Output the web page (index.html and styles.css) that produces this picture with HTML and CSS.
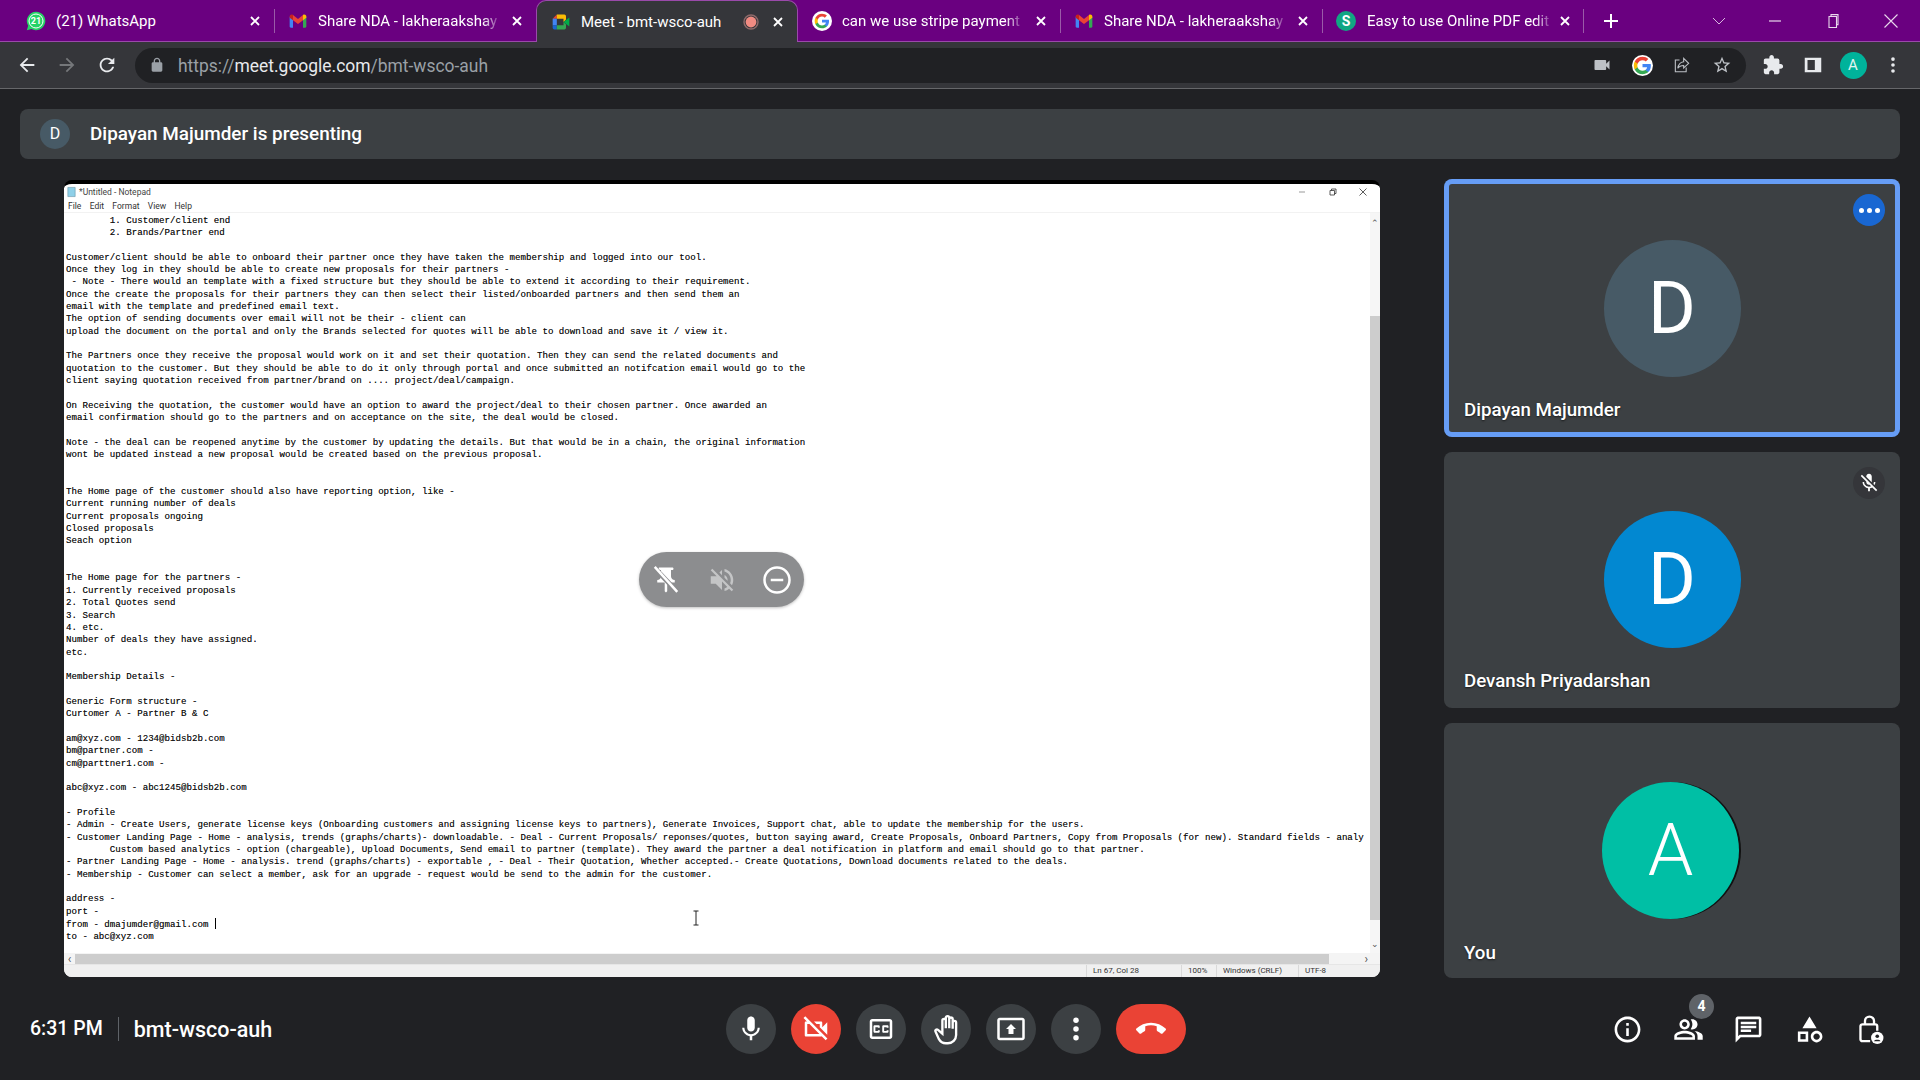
FILE: index.html
```html
<!DOCTYPE html>
<html>
	<head>
		<meta charset="UTF-8">
		<title>Meet - bmt-wsco-auh</title>
		<link rel="stylesheet" href="styles.css">
	</head>
	<body>
		<svg class="defs" width="0" height="0">
			<symbol id="i-x" viewBox="0 0 12 12"><path d="M2 2l8 8M10 2l-8 8" fill="none" stroke="#fff" stroke-width="1.8"/></symbol>
			<symbol id="i-gmail" viewBox="0 0 24 24">
				<path d="M2 7h4v13H3.4C2.6 20 2 19.4 2 18.6z" fill="#4285f4"/>
				<path d="M18 7h4v11.6c0 .8-.6 1.4-1.4 1.4H18z" fill="#34a853"/>
				<path d="M6 4.8l6 4.7 6-4.7v6.2l-6 4.6-6-4.6z" fill="#ea4335"/>
				<path d="M2 6.5C2 4.5 4.3 3.4 5.8 4.6l.2.2V11L2 8z" fill="#c5221f"/>
				<path d="M22 6.5c0-2-2.3-3.1-3.8-1.9l-.2.2V11l4-3z" fill="#fbbc04"/>
			</symbol>
			<symbol id="i-g" viewBox="0 0 24 24">
				<path d="M22.56 12.25c0-.78-.07-1.53-.2-2.25H12v4.26h5.92c-.26 1.37-1.04 2.53-2.21 3.31v2.77h3.57c2.08-1.92 3.28-4.74 3.28-8.09z" fill="#4285f4"/>
				<path d="M12 23c2.97 0 5.46-.98 7.28-2.66l-3.57-2.77c-.98.66-2.23 1.06-3.71 1.06-2.86 0-5.29-1.93-6.16-4.53H2.18v2.84C3.99 20.53 7.7 23 12 23z" fill="#34a853"/>
				<path d="M5.84 14.09c-.22-.66-.35-1.36-.35-2.09s.13-1.43.35-2.09V7.07H2.18C1.43 8.55 1 10.22 1 12s.43 3.45 1.18 4.93l2.85-2.22.81-.62z" fill="#fbbc05"/>
				<path d="M12 5.38c1.62 0 3.06.56 4.21 1.64l3.15-3.15C17.45 2.09 14.97 1 12 1 7.7 1 3.99 3.47 2.18 7.07l3.66 2.84c.87-2.6 3.3-4.53 6.16-4.53z" fill="#ea4335"/>
			</symbol>
		</svg>

		<div class="tabstrip">
			<div class="tab">
				<svg class="fav" viewBox="0 0 24 24"><path d="M12 1a11 11 0 0 0-9.4 16.6L1 23l5.6-1.5A11 11 0 1 0 12 1z" fill="#25d366"/><circle cx="12" cy="12" r="8.4" fill="none" stroke="#fff" stroke-width="1.2"/><text x="12" y="16" text-anchor="middle" class="fav-num">21</text></svg>
				<span class="tab-title">(21) WhatsApp</span>
				<svg class="tab-x"><use href="#i-x"/></svg>
			</div>
			<div class="tab sep">
				<svg class="fav"><use href="#i-gmail"/></svg>
				<span class="tab-title fade">Share NDA - lakheraakshay</span>
				<svg class="tab-x"><use href="#i-x"/></svg>
			</div>
			<div class="tab active">
				<svg class="fav" viewBox="0 0 24 24">
					<path d="M2 8l5-5v5z" fill="#ea4335"/>
					<path d="M2 8h5v8H2z" fill="#4285f4"/>
					<path d="M7 3h9a2 2 0 0 1 2 2v4l-3 3V8H7z" fill="#fbbc04"/>
					<path d="M2 16h5v5H4a2 2 0 0 1-2-2z" fill="#1967d2"/>
					<path d="M7 16h8v-4l3 3v4a2 2 0 0 1-2 2H7z" fill="#34a853"/>
					<path d="M15 12l7-5.5v11z" fill="#00ac47"/>
				</svg>
				<span class="tab-title">Meet - bmt-wsco-auh</span>
				<svg class="rec" viewBox="0 0 16 16"><circle cx="8" cy="8" r="7" fill="none" stroke="#8f6a6a" stroke-width="1.4"/><circle cx="8" cy="8" r="5.4" fill="#f28b82"/></svg>
				<svg class="tab-x"><use href="#i-x"/></svg>
			</div>
			<div class="tab">
				<span class="fav-disc"><svg class="fav-in"><use href="#i-g"/></svg></span>
				<span class="tab-title fade">can we use stripe payment</span>
				<svg class="tab-x"><use href="#i-x"/></svg>
			</div>
			<div class="tab sep">
				<svg class="fav"><use href="#i-gmail"/></svg>
				<span class="tab-title fade">Share NDA - lakheraakshay</span>
				<svg class="tab-x"><use href="#i-x"/></svg>
			</div>
			<div class="tab sep last">
				<span class="fav-s">S</span>
				<span class="tab-title fade">Easy to use Online PDF edit</span>
				<svg class="tab-x"><use href="#i-x"/></svg>
			</div>
			<svg class="tab-new" viewBox="0 0 16 16"><path d="M8 1v14M1 8h14" stroke="#fff" stroke-width="2"/></svg>
			<div class="win">
				<svg class="win-btn chevron" viewBox="0 0 16 16"><path d="M2 5l6 6 6-6" fill="none" stroke="#d9b8e0" stroke-width="1"/></svg>
				<svg class="win-btn" viewBox="0 0 16 16"><path d="M2 8h12" stroke="#e8d8ec" stroke-width="1.2"/></svg>
				<svg class="win-btn" viewBox="0 0 16 16"><path d="M4 3.500h7.500v11H4zM6 3.500V1.600h7v10h-1.500" fill="none" stroke="#e8d8ec" stroke-width="1.1"/></svg>
				<svg class="win-btn" viewBox="0 0 16 16"><path d="M1.500 1.500l13 13M14.500 1.500l-13 13" stroke="#e8d8ec" stroke-width="1.1"/></svg>
			</div>
		</div>

		<div class="toolbar">
			<svg class="tool" viewBox="0 0 24 24"><path d="M20 11H7.830l5.590-5.590L12 4l-8 8 8 8 1.410-1.410L7.830 13H20v-2z" fill="#e8eaed"/></svg>
			<svg class="tool" viewBox="0 0 24 24"><path d="M12 4l-1.410 1.410L16.170 11H4v2h12.170l-5.580 5.590L12 20l8-8z" fill="#75777a"/></svg>
			<svg class="tool" viewBox="0 0 24 24"><path d="M17.650 6.350C16.200 4.900 14.210 4 12 4c-4.420 0-7.990 3.580-7.990 8s3.570 8 7.990 8c3.730 0 6.840-2.550 7.730-6h-2.080c-.82 2.330-3.040 4-5.650 4-3.310 0-6-2.690-6-6s2.690-6 6-6c1.660 0 3.140.69 4.220 1.780L13 11h7V4l-2.350 2.350z" fill="#e8eaed"/></svg>
			<div class="omnibox">
				<svg class="omni-lock" viewBox="0 0 24 24"><path d="M18 8h-1V6c0-2.760-2.240-5-5-5S7 3.240 7 6v2H6c-1.100 0-2 .9-2 2v10c0 1.100.9 2 2 2h12c1.100 0 2-.9 2-2V10c0-1.100-.9-2-2-2zM9 6c0-1.660 1.340-3 3-3s3 1.340 3 3v2H9V6z" fill="#9aa0a6"/></svg>
				<span class="url">https://<b>meet.google.com</b>/bmt-wsco-auh</span>
				<div class="omni-icons">
					<svg class="omni-icon" viewBox="0 0 24 24"><path d="M17 10.500V7c0-.55-.45-1-1-1H4c-.55 0-1 .45-1 1v10c0 .55.45 1 1 1h12c.55 0 1-.45 1-1v-3.500l4 4v-11l-4 4z" fill="#bdc1c6"/></svg>
					<span class="g-disc"><svg class="g-in"><use href="#i-g"/></svg></span>
					<svg class="omni-icon" viewBox="0 0 24 24"><path d="M9 6H4v14h13v-5" fill="none" stroke="#bdc1c6" stroke-width="1.3"/><path d="M14 4l6 6-6 5.500V12.500c-3.500 0-5.500 1-7 3.500.5-4.500 3-7.500 7-8z" fill="none" stroke="#bdc1c6" stroke-width="1.3"/></svg>
					<svg class="omni-icon" viewBox="0 0 24 24"><path d="M22 9.240l-7.190-.62L12 2 9.190 8.630 2 9.240l5.460 4.730L5.820 21 12 17.270 18.180 21l-1.630-7.030L22 9.240zM12 15.400l-3.760 2.270 1-4.280-3.320-2.880 4.380-.38L12 6.100l1.710 4.040 4.380.38-3.320 2.880 1 4.280L12 15.400z" fill="#bdc1c6"/></svg>
				</div>
			</div>
			<div class="tool-right">
				<svg class="tool" viewBox="0 0 24 24"><path d="M20.500 11H19V7c0-1.100-.9-2-2-2h-4V3.500C13 2.120 11.880 1 10.500 1S8 2.120 8 3.500V5H4c-1.100 0-1.990.9-1.990 2v3.800H3.500c1.490 0 2.700 1.210 2.700 2.700s-1.210 2.700-2.700 2.700H2V20c0 1.100.9 2 2 2h3.800v-1.500c0-1.490 1.210-2.700 2.700-2.700 1.490 0 2.700 1.210 2.700 2.700V22H17c1.100 0 2-.9 2-2v-4h1.500c1.380 0 2.500-1.120 2.500-2.500S21.880 11 20.500 11z" fill="#e8eaed"/></svg>
				<svg class="tool" viewBox="0 0 24 24"><path d="M3 4h18v16H3zM6 6.500v11h8v-11z" fill="#e8eaed" fill-rule="evenodd"/></svg>
				<span class="tool-avatar"><span class="tool-avatar-in">A</span></span>
				<svg class="tool" viewBox="0 0 24 24"><circle cx="12" cy="5.500" r="2" fill="#e8eaed"/><circle cx="12" cy="12" r="2" fill="#e8eaed"/><circle cx="12" cy="18.500" r="2" fill="#e8eaed"/></svg>
			</div>
		</div>

		<div class="presenting">
			<span class="presenting-avatar">D</span>
			<span class="presenting-text">Dipayan Majumder is presenting</span>
		</div>

		<div class="stage">
			<div class="screen">
				<div class="np-title">
					<svg class="np-icon" viewBox="0 0 12 12"><path d="M2 1h8v10H2z" fill="#8fd0e8" stroke="#5f8ea0" stroke-width=".6"/></svg>
					<span class="np-name">*Untitled - Notepad</span>
					<svg class="np-win" viewBox="0 0 10 10"><path d="M2 5h6" stroke="#999" stroke-width="1"/></svg>
					<svg class="np-win" viewBox="0 0 10 10"><path d="M2 3.500h4.500V8H2zM3.500 3.500V2H8v4.500H6.500" fill="none" stroke="#333" stroke-width=".8"/></svg>
					<svg class="np-win" viewBox="0 0 10 10"><path d="M1.500 1.500l7 7M8.500 1.500l-7 7" stroke="#333" stroke-width=".8"/></svg>
				</div>
				<div class="np-menu">
					<span>File</span><span>Edit</span><span>Format</span><span>View</span><span>Help</span>
				</div>
				<div class="np-body">
<pre class="np-text">	1. Customer/client end
	2. Brands/Partner end

Customer/client should be able to onboard their partner once they have taken the membership and logged into our tool.
Once they log in they should be able to create new proposals for their partners -
 - Note - There would an template with a fixed structure but they should be able to extend it according to their requirement.
Once the create the proposals for their partners they can then select their listed/onboarded partners and then send them an
email with the template and predefined email text.
The option of sending documents over email will not be their - client can
upload the document on the portal and only the Brands selected for quotes will be able to download and save it / view it.

The Partners once they receive the proposal would work on it and set their quotation. Then they can send the related documents and
quotation to the customer. But they should be able to do it only through portal and once submitted an notifcation email would go to the
client saying quotation received from partner/brand on .... project/deal/campaign.

On Receiving the quotation, the customer would have an option to award the project/deal to their chosen partner. Once awarded an
email confirmation should go to the partners and on acceptance on the site, the deal would be closed.

Note - the deal can be reopened anytime by the customer by updating the details. But that would be in a chain, the original information
wont be updated instead a new proposal would be created based on the previous proposal.


The Home page of the customer should also have reporting option, like -
Current running number of deals
Current proposals ongoing
Closed proposals
Seach option


The Home page for the partners -
1. Currently received proposals
2. Total Quotes send
3. Search
4. etc.
Number of deals they have assigned.
etc.

Membership Details -

Generic Form structure -
Curtomer A - Partner B &amp; C

am@xyz.com - 1234@bidsb2b.com
bm@partner.com -
cm@parttner1.com -

abc@xyz.com - abc1245@bidsb2b.com

- Profile
- Admin - Create Users, generate license keys (Onboarding customers and assigning license keys to partners), Generate Invoices, Support chat, able to update the membership for the users.
- Customer Landing Page - Home - analysis, trends (graphs/charts)- downloadable. - Deal - Current Proposals/ reponses/quotes, button saying award, Create Proposals, Onboard Partners, Copy from Proposals (for new). Standard fields - analy
	Custom based analytics - option (chargeable), Upload Documents, Send email to partner (template). They award the partner a deal notification in platform and email should go to that partner.
- Partner Landing Page - Home - analysis. trend (graphs/charts) - exportable , - Deal - Their Quotation, Whether accepted.- Create Quotations, Download documents related to the deals.
- Membership - Customer can select a member, ask for an upgrade - request would be send to the admin for the customer.

address -
port -
from - dmajumder@gmail.com <span class="caret"></span>
to - abc@xyz.com</pre>
					<div class="vscroll">
						<span class="arrow">&#8963;</span>
						<div class="vthumb"></div>
						<span class="arrow arrow-down">&#8964;</span>
					</div>
				</div>
				<div class="hscroll">
					<span class="harrow">&#8249;</span>
					<div class="hthumb"></div>
					<span class="harrow harrow-r">&#8250;</span>
				</div>
				<div class="np-status">
					<span class="st st-pos">Ln 67, Col 28</span>
					<span class="st st-zoom">100%</span>
					<span class="st st-eol">Windows (CRLF)</span>
					<span class="st st-enc">UTF-8</span>
				</div>

				<svg class="ibeam" viewBox="0 0 8 16"><path d="M1.500 1h5M4 1v14M1.500 15h5" fill="none" stroke="#222" stroke-width="1"/></svg>

				<div class="pill">
					<svg class="pill-icon" viewBox="0 0 24 24"><path d="M16 9V4h1c.55 0 1-.45 1-1s-.45-1-1-1H7c-.55 0-1 .45-1 1s.45 1 1 1h1v5c0 1.660-1.340 3-3 3v2h5.970v7l1 1 1-1v-7H19v-2c-1.660 0-3-1.340-3-3z" fill="#fff"/><path d="M3 2.500l18 19" stroke="#8c8d8f" stroke-width="4"/><path d="M3 1.500l18 20" stroke="#fff" stroke-width="2"/></svg>
					<svg class="pill-icon" viewBox="0 0 24 24"><path d="M16.500 12c0-1.770-1.020-3.290-2.500-4.030v2.210l2.450 2.450c.03-.2.05-.41.05-.63zm2.500 0c0 .94-.2 1.820-.54 2.640l1.510 1.510C20.630 14.910 21 13.500 21 12c0-4.280-2.990-7.860-7-8.770v2.060c2.890.86 5 3.540 5 6.710zM4.270 3L3 4.270 7.730 9H3v6h4l5 5v-6.730l4.250 4.250c-.67.52-1.420.93-2.250 1.180v2.060c1.380-.31 2.630-.95 3.690-1.810L19.730 21 21 19.730l-9-9L4.270 3zM12 4L9.910 6.090 12 8.180V4z" fill="#c4c5c6"/></svg>
					<svg class="pill-icon" viewBox="0 0 24 24"><circle cx="12" cy="12" r="10" fill="none" stroke="#fff" stroke-width="2"/><path d="M7 12h10" stroke="#fff" stroke-width="2"/></svg>
				</div>
			</div>

			<div class="tiles">
				<div class="tile speaking">
					<div class="avatar av-slate">D</div>
					<span class="tile-name">Dipayan Majumder</span>
					<span class="tile-badge badge-blue"><i></i><i></i><i></i></span>
				</div>
				<div class="tile">
					<div class="avatar av-blue">D</div>
					<span class="tile-name">Devansh Priyadarshan</span>
					<span class="tile-badge badge-dark">
						<svg class="badge-icon" viewBox="0 0 24 24"><path d="M19 11h-1.700c0 .74-.16 1.430-.43 2.050l1.230 1.230c.56-.98.9-2.090.9-3.280zm-4.020.17c0-.06.02-.11.02-.17V5c0-1.660-1.340-3-3-3S9 3.340 9 5v.18l5.980 5.990zM4.270 3L3 4.270l6.010 6.010V11c0 1.660 1.330 3 2.990 3 .22 0 .44-.03.65-.08l1.660 1.660c-.71.33-1.500.52-2.310.52-2.760 0-5.300-2.100-5.300-5.100H5c0 3.410 2.720 6.230 6 6.720V21h2v-3.280c.91-.13 1.770-.45 2.540-.9L19.730 21 21 19.730 4.270 3z" fill="#fff"/></svg>
					</span>
				</div>
				<div class="tile">
					<div class="avatar av-teal">A</div>
					<span class="tile-name tile-name-you">You</span>
				</div>
			</div>
		</div>

		<div class="footer">
			<div class="meeting">
				<span class="clock">6:31 PM</span>
				<span class="code">bmt-wsco-auh</span>
			</div>
			<div class="controls">
				<button class="ctl"><svg class="ctl-icon" viewBox="0 0 24 24"><path d="M12 14c1.660 0 3-1.340 3-3V5c0-1.660-1.340-3-3-3S9 3.340 9 5v6c0 1.660 1.340 3 3 3zm5.300-3c0 3-2.540 5.100-5.300 5.100S6.700 14 6.700 11H5c0 3.410 2.720 6.230 6 6.720V21h2v-3.280c3.280-.48 6-3.300 6-6.720h-1.700z" fill="#fff"/></svg></button>
				<button class="ctl red"><svg class="ctl-icon" viewBox="0 0 24 24"><path d="M9.560 8l-2-2-4.150-4.140L2 3.270 4.730 6H4c-.55 0-1 .45-1 1v10c0 .55.45 1 1 1h12c.21 0 .39-.08.55-.18L19.730 21l1.410-1.410-8.860-8.860L9.560 8zM5 16V8h1.730l8 8H5zm10-8v2.610l6 6V6.500l-4 4V7c0-.55-.45-1-1-1h-5.610l2 2H15z" fill="#fff"/></svg></button>
				<button class="ctl"><svg class="ctl-icon" viewBox="0 0 24 24"><path d="M19 4H5c-1.110 0-2 .9-2 2v12c0 1.100.89 2 2 2h14c1.100 0 2-.9 2-2V6c0-1.100-.9-2-2-2zm0 14H5V6h14v12zM7 15h3c.55 0 1-.45 1-1v-1H9.500v.5h-2v-3h2v.5H11v-1c0-.55-.45-1-1-1H7c-.55 0-1 .45-1 1v4c0 .55.45 1 1 1zm7 0h3c.55 0 1-.45 1-1v-1h-1.500v.5h-2v-3h2v.5H18v-1c0-.55-.45-1-1-1h-3c-.55 0-1 .45-1 1v4c0 .55.45 1 1 1z" fill="#fff"/></svg></button>
				<button class="ctl"><svg class="ctl-icon hand" viewBox="0 0 24 24"><path d="M9 12V5.500a1.250 1.250 0 0 1 2.500 0V11M11.500 11V3.500a1.250 1.250 0 0 1 2.500 0V11M14 11V4.500a1.250 1.250 0 0 1 2.500 0v7M16.500 11.500V7a1.250 1.250 0 0 1 2.500 0v9a6 6 0 0 1-6 6h-1.500c-2.500 0-4-1.200-5-3L4 13.500c-.5-1 .8-2 1.800-1.200L9 15v-3" fill="none" stroke="#fff" stroke-width="1.7"/></svg></button>
				<button class="ctl"><svg class="ctl-icon" viewBox="0 0 24 24"><path d="M21 3H3c-1.110 0-2 .89-2 2v14c0 1.110.89 2 2 2h18c1.110 0 2-.89 2-2V5c0-1.110-.89-2-2-2zm0 16.020H3V4.980h18v14.040zM10 12H8l4-4 4 4h-2v4h-4v-4z" fill="#fff"/></svg></button>
				<button class="ctl"><svg class="ctl-icon" viewBox="0 0 24 24"><circle cx="12" cy="5" r="2.2" fill="#fff"/><circle cx="12" cy="12" r="2.2" fill="#fff"/><circle cx="12" cy="19" r="2.2" fill="#fff"/></svg></button>
				<button class="ctl hang"><svg class="ctl-icon" viewBox="0 0 24 24"><path d="M12 9c-1.600 0-3.150.25-4.600.72v3.100c0 .39-.23.74-.56.9-.98.49-1.870 1.120-2.660 1.850-.18.18-.43.28-.7.28-.28 0-.53-.11-.71-.29L.29 13.080c-.18-.17-.29-.42-.29-.7 0-.28.11-.53.29-.71C3.340 8.780 7.460 7 12 7s8.660 1.780 11.710 4.670c.18.18.29.43.29.71 0 .28-.11.53-.29.71l-2.480 2.480c-.18.18-.43.29-.71.29-.27 0-.52-.11-.7-.28-.79-.74-1.690-1.360-2.670-1.850-.33-.16-.56-.5-.56-.9v-3.100C15.150 9.250 13.600 9 12 9z" fill="#fff"/></svg></button>
			</div>
			<div class="side">
				<span class="side-btn"><svg class="side-icon" viewBox="0 0 24 24"><path d="M11 7h2v2h-2zm0 4h2v6h-2zm1-9C6.480 2 2 6.480 2 12s4.480 10 10 10 10-4.480 10-10S17.520 2 12 2zm0 18c-4.410 0-8-3.590-8-8s3.590-8 8-8 8 3.590 8 8-3.590 8-8 8z" fill="#fff"/></svg></span>
				<span class="side-btn"><svg class="side-icon" viewBox="0 0 24 24"><path d="M16.670 13.130C18.040 14.060 19 15.320 19 17v3h4v-3c0-2.180-3.570-3.470-6.330-3.870zM15 12c2.210 0 4-1.790 4-4s-1.790-4-4-4c-.47 0-.91.1-1.330.24C14.500 5.270 15 6.580 15 8s-.5 2.730-1.330 3.760c.42.14.86.24 1.330.24zM9 12c2.210 0 4-1.790 4-4s-1.790-4-4-4-4 1.790-4 4 1.790 4 4 4zm0-6c1.100 0 2 .9 2 2s-.9 2-2 2-2-.9-2-2 .9-2 2-2zM9 13c-2.670 0-8 1.340-8 4v3h16v-3c0-2.660-5.330-4-8-4zm6 5H3v-.99C3.200 16.290 6.300 15 9 15s5.800 1.290 6 2z" fill="#fff"/></svg><span class="count">4</span></span>
				<span class="side-btn"><svg class="side-icon" viewBox="0 0 24 24"><path d="M20 2H4c-1.100 0-2 .9-2 2v18l4-4h14c1.100 0 2-.9 2-2V4c0-1.100-.9-2-2-2zm0 14H5.170L4 17.170V4h16v12zM6 12h8v2H6zm0-3h12v2H6zm0-3h12v2H6z" fill="#fff"/></svg></span>
				<span class="side-btn"><svg class="side-icon" viewBox="0 0 24 24"><path d="M12 2l-5.500 9h11L12 2zM17.500 13c-2.490 0-4.500 2.010-4.500 4.500s2.010 4.500 4.500 4.500 4.500-2.010 4.500-4.500-2.010-4.500-4.500-4.500zm0 7c-1.380 0-2.500-1.120-2.500-2.500s1.120-2.500 2.500-2.500 2.500 1.120 2.500 2.500-1.120 2.500-2.500 2.500zM3 21.500h8v-8H3v8zm2-6h4v4H5v-4z" fill="#fff"/></svg></span>
				<span class="side-btn"><svg class="side-icon" viewBox="0 0 24 24"><path d="M8.500 8V5.500a3.500 3.500 0 0 1 7 0V8M12.500 21H6.500A1.500 1.500 0 0 1 5 19.500v-10A1.500 1.500 0 0 1 6.500 8h10A1.500 1.500 0 0 1 18 9.500V13" fill="none" stroke="#fff" stroke-width="1.8"/><circle cx="18" cy="18.500" r="4.800" fill="#fff"/><circle cx="18" cy="17.200" r="1.400" fill="#202124"/><path d="M15.500 21c.5-1.400 4.500-1.400 5 0z" fill="#202124"/></svg></span>
			</div>
		</div>
	</body>
</html>
```

FILE: styles.css
```css
* {
	box-sizing: border-box;
}
html, body {
	margin: 0;
	height: 100%;
}
body {
	width: 1920px;
	height: 1080px;
	overflow: hidden;
	display: flex;
	flex-direction: column;
	background-color: #202124;
	color: #fff;
	font-family: Roboto, "Liberation Sans", sans-serif;
}
.defs {
	position: absolute;
}

/* tabs */
.tabstrip {
	display: flex;
	align-items: center;
	height: 42px;
	padding-left: 12px;
	background-color: #6a0080;
	border-bottom: 1px solid #9a4aaa;
}
.tab {
	display: flex;
	align-items: center;
	width: 262px;
	height: 41px;
	padding: 0 13px 0 14px;
	font-size: 15px;
}
.tab.sep {
	background: linear-gradient(#9a5aa8, #9a5aa8) no-repeat left center / 1px 24px;
}
.tab.last {
	background:
		linear-gradient(#9a5aa8, #9a5aa8) no-repeat left center / 1px 24px,
		linear-gradient(#9a5aa8, #9a5aa8) no-repeat right center / 1px 24px;
}
.tab.active {
	height: 42px;
	margin-top: 1px;
	padding-left: 14px;
	background-color: #35363a;
	border: 1px solid #9a4aaa;
	border-bottom: none;
	border-radius: 10px 10px 0 0;
}
.fav {
	flex: none;
	width: 20px;
	height: 20px;
	margin-right: 10px;
}
.fav-num {
	fill: #fff;
	font: 700 11px Roboto, sans-serif;
}
.fav-disc {
	flex: none;
	display: flex;
	align-items: center;
	justify-content: center;
	width: 20px;
	height: 20px;
	margin-right: 10px;
	border-radius: 50%;
	background-color: #fff;
}
.fav-in {
	width: 16px;
	height: 16px;
}
.fav-s {
	flex: none;
	width: 20px;
	height: 20px;
	margin-right: 11px;
	border-radius: 50%;
	background-color: #11a683;
	font: 700 14px/20px Roboto, sans-serif;
	text-align: center;
}
.tab-title {
	white-space: nowrap;
	color: #fff;
}
.tab-title.fade {
	-webkit-mask-image: linear-gradient(to left, rgba(0, 0, 0, .25) 0, #000 14px);
	mask-image: linear-gradient(to left, rgba(0, 0, 0, .25) 0, #000 14px);
}
.tab-x {
	flex: none;
	width: 12px;
	height: 12px;
	margin-left: auto;
}
.rec {
	flex: none;
	width: 16px;
	height: 16px;
	margin-left: auto;
	margin-right: 13px;
}
.rec + .tab-x {
	margin-left: 0;
}
.tab-new {
	width: 16px;
	height: 16px;
	margin-left: 19px;
}
.win {
	display: flex;
	margin-left: auto;
}
.win-btn {
	width: 16px;
	height: 16px;
	margin: 0 21px;
}
.win-btn.chevron {
	margin: 0 19px 0 23px;
}

/* browser toolbar */
.toolbar {
	display: flex;
	align-items: center;
	height: 47px;
	padding: 0 7px;
	background-color: #35363a;
	border-bottom: 1px solid #66676a;
}
.tool {
	flex: none;
	width: 40px;
	height: 22px;
}
.omnibox {
	flex: 1;
	display: flex;
	align-items: center;
	height: 35px;
	margin-left: 8px;
	margin-right: 7px;
	padding: 0 4px 0 12px;
	background-color: #202124;
	border-radius: 18px;
}
.omni-lock {
	width: 20px;
	height: 16px;
	margin-right: 11px;
}
.url {
	padding-top: 1px;
	font-size: 17.45px;
	color: #9aa0a6;
}
.url b {
	font-weight: 400;
	color: #e8eaed;
}
.omni-icons {
	display: flex;
	align-items: center;
	margin-left: auto;
}
.omni-icon {
	width: 40px;
	height: 20px;
}
.g-disc {
	display: flex;
	justify-content: center;
	width: 40px;
}
.g-in {
	width: 21px;
	height: 21px;
	padding: 1px;
	background-color: #fff;
	border-radius: 50%;
}
.tool-right {
	display: flex;
	align-items: center;
}
.tool-avatar {
	display: flex;
	justify-content: center;
	width: 40px;
}
.tool-avatar-in {
	width: 27px;
	height: 27px;
	border-radius: 50%;
	background-color: #00b39b;
	color: #e0f5f1;
	font-size: 15px;
	line-height: 27px;
	text-align: center;
}

/* presenting banner */
.presenting {
	display: flex;
	align-items: center;
	height: 50px;
	margin: 20px 20px 0;
	padding-left: 20px;
	background-color: #3c4043;
	border-radius: 8px;
}
.presenting-avatar {
	width: 30px;
	height: 30px;
	margin-right: 20px;
	border-radius: 50%;
	background-color: #475a66;
	font-size: 16px;
	line-height: 30px;
	text-align: center;
}
.presenting-text {
	font-size: 18.9px;
	font-weight: 500;
	line-height: 50px;
}

/* shared screen and tiles */
.stage {
	display: flex;
	justify-content: space-between;
	height: 799px;
	margin: 20px 20px 0 64px;
}
.screen {
	position: relative;
	display: flex;
	flex-direction: column;
	width: 1316px;
	height: 797px;
	margin-top: 1px;
	overflow: hidden;
	background-color: #fff;
	border-top: 4px solid #000;
	border-radius: 8px;
	color: #333;
}
.np-title {
	display: flex;
	align-items: center;
	height: 15px;
	padding-left: 2px;
	font-size: 8.5px;
}
.np-icon {
	width: 11px;
	height: 12px;
	margin-right: 2px;
}
.np-name {
	flex: 1;
	color: #444;
}
.np-win {
	width: 10px;
	height: 10px;
	margin-right: 20.5px;
}
.np-win:last-child {
	margin-right: 12px;
}
.np-menu {
	display: flex;
	gap: 8.3px;
	height: 14px;
	padding: 1px 0 0 4px;
	border-bottom: 1px solid #f2f2f2;
	font-size: 8.5px;
	line-height: 13px;
}
.np-body {
	display: flex;
	height: 740px;
}
.np-text {
	flex: 1;
	min-width: 0;
	margin: 0 3px 0 0;
	padding: 1.5px 0 0 2px;
	overflow: hidden;
	font: 9.145px/12.35px "Liberation Mono", "DejaVu Sans Mono", monospace;
	color: #111;
	tab-size: 8;
	text-shadow: 0 0 .5px rgba(0, 0, 0, .55);
}
.caret {
	display: inline-block;
	width: 1px;
	height: 11px;
	margin-left: 1px;
	vertical-align: -2px;
	background-color: #000;
}
.vscroll {
	position: relative;
	flex: none;
	width: 10px;
	padding-top: 103px;
	background-color: #f6f6f6;
}
.vthumb {
	height: 604px;
	background-color: #cdcdcd;
}
.arrow {
	position: absolute;
	top: 6px;
	left: 0;
	width: 10px;
	font-size: 9px;
	line-height: 9px;
	text-align: center;
	color: #555;
}
.arrow-down {
	top: 727px;
}
.hscroll {
	display: flex;
	align-items: center;
	height: 11px;
	background-color: #f4f4f4;
	font-size: 12px;
	color: #555;
}
.harrow {
	width: 11px;
	text-align: center;
	line-height: 10px;
}
.harrow-r {
	width: 51px;
	padding-right: 12px;
	text-align: right;
}
.hthumb {
	width: 1254px;
	height: 10px;
	background-color: #cdcdcd;
}
.np-status {
	display: flex;
	justify-content: flex-end;
	height: 13px;
	background-color: #f0f0f0;
	border-top: 1px solid #e6e6e6;
	font-size: 8px;
	line-height: 12px;
	color: #333;
}
.st {
	padding-left: 6px;
	border-left: 1px solid #d9d9d9;
}
.st-pos { width: 95px; }
.st-zoom { width: 35px; }
.st-eol { width: 82px; }
.st-enc { width: 82px; }
.ibeam {
	position: absolute;
	left: 628px;
	top: 726px;
	width: 8px;
	height: 16px;
}
.pill {
	position: absolute;
	left: 575px;
	top: 368px;
	display: flex;
	align-items: center;
	justify-content: space-between;
	width: 165px;
	height: 55px;
	padding: 0 12px;
	background-color: #8c8d8f;
	border-radius: 28px;
	box-shadow: 0 1px 3px rgba(0, 0, 0, .25);
}
.pill-icon {
	width: 30px;
	height: 30px;
}
.tiles {
	display: flex;
	flex-direction: column;
	gap: 15px;
	width: 456px;
}
.tile {
	position: relative;
	flex: 1;
	display: flex;
	align-items: center;
	justify-content: center;
	background-color: #3c4043;
	border-radius: 8px;
}
.tile.speaking {
	flex: none;
	height: 258px;
	box-shadow: inset 0 0 0 5px #669df6;
}
.avatar {
	width: 137px;
	height: 137px;
	border-radius: 50%;
	font-size: 73px;
	line-height: 137px;
	text-align: center;
}
.av-slate { background-color: #475a66; }
.av-blue { background-color: #0288d1; }
.av-teal {
	margin-right: 3px;
	font-weight: 300;
	background-color: #00bfa5;
	box-shadow: 2px 0 0 #111;
}
.tile-name {
	position: absolute;
	left: 20px;
	bottom: 16px;
	font-size: 18.7px;
	font-weight: 500;
	line-height: 22px;
	text-shadow: 0 1px 2px rgba(0, 0, 0, .6);
}
.tile-name-you {
	bottom: 14px;
}
.tile-badge {
	position: absolute;
	top: 15px;
	right: 15px;
	display: flex;
	align-items: center;
	justify-content: center;
	width: 32px;
	height: 32px;
	border-radius: 50%;
}
.badge-blue {
	gap: 3px;
	background-color: #1967d2;
}
.badge-blue i {
	width: 5px;
	height: 5px;
	border-radius: 50%;
	background-color: #fff;
}
.badge-dark {
	background-color: #35363a;
}
.badge-icon {
	width: 22px;
	height: 22px;
}

/* bottom bar */
.footer {
	flex: 1;
	display: flex;
	align-items: center;
}
.meeting {
	display: flex;
	align-items: center;
	width: 726px;
	padding-left: 30px;
	font-weight: 500;
}
.clock {
	padding-right: 15px;
	border-right: 1px solid #5f6368;
	font-size: 19.5px;
	line-height: 24px;
}
.code {
	margin-left: 15px;
	font-size: 21.5px;
}
.controls {
	display: flex;
	gap: 15px;
}
.ctl {
	display: flex;
	align-items: center;
	justify-content: center;
	width: 50px;
	height: 50px;
	padding: 0;
	border: none;
	border-radius: 50%;
	background-color: #3c4043;
}
.ctl.red {
	background-color: #ea4335;
}
.ctl.hang {
	width: 70px;
	border-radius: 25px;
	background-color: #ea4335;
}
.ctl-icon {
	width: 30px;
	height: 30px;
}
.ctl-icon.hand {
	width: 33px;
	height: 33px;
}
.side {
	display: flex;
	margin-left: auto;
	padding-right: 20px;
}
.side-btn {
	position: relative;
	display: flex;
	justify-content: center;
	width: 60.5px;
}
.side-icon {
	width: 31px;
	height: 31px;
}
.count {
	position: absolute;
	top: -20px;
	left: 31px;
	width: 25px;
	height: 25px;
	border-radius: 50%;
	background-color: #5f6368;
	font-size: 14px;
	font-weight: 700;
	line-height: 25px;
	text-align: center;
}
```
